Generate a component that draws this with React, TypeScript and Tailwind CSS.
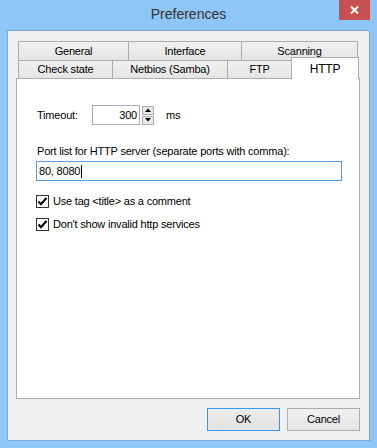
import React from "react";

const Tab = ({ label, w, last }: { label: string; w: number; last?: boolean }) => (
  <div
    className={`h-full flex items-center justify-center border-t border-l border-[#acacac] bg-gradient-to-b from-[#f0f0f0] to-[#e5e5e5] ${last ? "border-r" : ""}`}
    style={{ width: w }}
  >
    {label}
  </div>
);

const Check = () => (
  <div className="w-[13px] h-[13px] border border-[#333] bg-white flex items-center justify-center">
    <svg width="11" height="11" viewBox="0 0 11 11">
      <path d="M1.5 5.5 L4 8.2 L9.5 2" stroke="#000" strokeWidth="2.2" fill="none" />
    </svg>
  </div>
);

export default function App() {
  return (
    <div className="w-[377px] h-[448px] bg-[#8ec6f7] flex flex-col font-['Liberation_Sans',Arial,sans-serif] text-[11px] tracking-[-0.2px] text-black">
      <div className="h-[30px] relative flex items-center justify-center">
        <span className="text-[14px] tracking-normal text-[#333] pb-[1px]">Preferences</span>
        <div className="absolute right-[7px] top-0 w-[31px] h-[20px] bg-[#c75050] flex items-center justify-center">
          <svg width="9" height="8" viewBox="0 0 9 8">
            <path d="M1 0.5 L8 7.5 M8 0.5 L1 7.5" stroke="#fff" strokeWidth="2" />
          </svg>
        </div>
      </div>
      <div className="mx-[7px] h-[411px] border border-[#7fa9d2] bg-[#f0f0f0] flex flex-col">
        <div className="pt-[10px] pl-[10px] flex flex-col">
          <div className="h-[19px] flex">
            <Tab label="General" w={110} />
            <Tab label="Interface" w={113} />
            <Tab label="Scanning" w={117} last />
          </div>
          <div className="h-[18px] flex items-end">
            <Tab label="Check state" w={94} />
            <Tab label="Netbios (Samba)" w={115} />
            <Tab label="FTP" w={64} />
            <div className="relative z-10 w-[68px] h-[22px] -mb-px border-t border-l border-r border-[#acacac] bg-white flex justify-center pt-[2px] text-[12px]">
              HTTP
            </div>
          </div>
        </div>
        <div className="ml-[8px] w-[344px] h-[321px] border border-[#adadad] bg-white flex flex-col pl-[19px]">
          <div className="mt-[26px] h-[20px] flex items-center">
            <span className="w-[56px] pl-[1px]">Timeout:</span>
            <div className="w-[48px] h-[20px] border border-[#abadb3] flex items-center justify-end pr-[2px]">300</div>
            <div className="ml-[2px] w-[12px] h-[19px] flex flex-col gap-[1px]">
              <div className="h-[9px] border border-[#acacac] bg-[#e8e8e8] flex items-center justify-center">
                <svg width="6" height="4" viewBox="0 0 6 4"><path d="M0 4 L3 0.5 L6 4 Z" fill="#000" /></svg>
              </div>
              <div className="h-[9px] border border-[#acacac] bg-[#e8e8e8] flex items-center justify-center">
                <svg width="6" height="4" viewBox="0 0 6 4"><path d="M0 0 L3 3.5 L6 0 Z" fill="#000" /></svg>
              </div>
            </div>
            <span className="ml-[12px]">ms</span>
          </div>
          <div className="mt-[19px] h-[14px] leading-[14px] pl-[1px]">Port list for HTTP server (separate ports with comma):</div>
          <div className="mt-[3px] w-[306px] h-[20px] border border-[#569de5] flex items-center pl-[2px]">
            <span>80, 8080</span>
            <span className="w-px h-[13px] bg-black ml-[1px]" />
          </div>
          <div className="mt-[14px] h-[13px] flex items-center gap-[4px]">
            <Check />
            <span>Use tag &lt;title&gt; as a comment</span>
          </div>
          <div className="mt-[10px] h-[13px] flex items-center gap-[4px]">
            <Check />
            <span>Don't show invalid http services</span>
          </div>
        </div>
        <div className="mt-[9px] flex justify-end gap-[7px] pr-[9px]">
          <div className="w-[73px] h-[23px] border border-[#3399ff] bg-gradient-to-b from-[#ececec] to-[#e2e2e2] flex items-center justify-center">OK</div>
          <div className="w-[73px] h-[23px] border border-[#acacac] bg-gradient-to-b from-[#f0f0f0] to-[#e5e5e5] flex items-center justify-center">Cancel</div>
        </div>
      </div>
    </div>
  );
}
